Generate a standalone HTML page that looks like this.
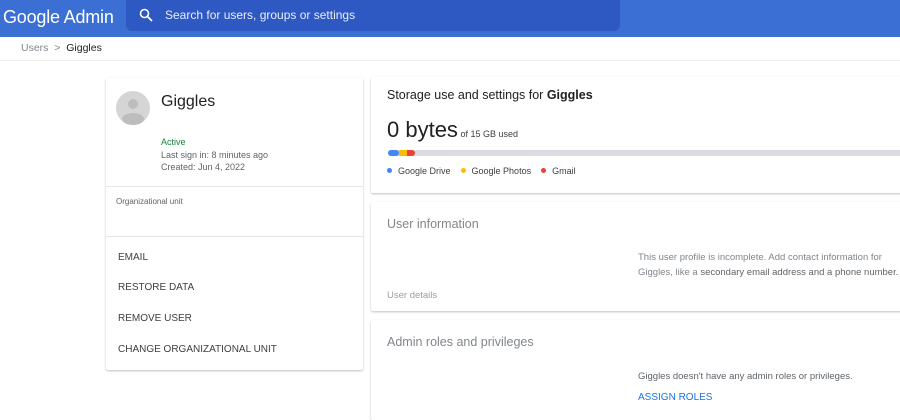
<!DOCTYPE html>
<html><head><meta charset="utf-8"><style>
*{box-sizing:border-box;margin:0;padding:0}
body{width:900px;height:412px;overflow:hidden;background:#fff;font-family:"Liberation Sans",Arial,sans-serif;color:#3c4043;position:relative}
.hdr{position:absolute;left:0;top:0;width:900px;height:37px;background:#3b6fd4}
.logo{position:absolute;left:3px;top:7px;color:#fff;font-size:18px;letter-spacing:-0.2px}
.search{position:absolute;left:126px;top:0;width:494px;height:31px;background:#2e58c2;border-radius:0 0 6px 6px}
.search span{position:absolute;left:39px;top:8px;color:#e8eefc;font-size:12px}
.bc{position:absolute;left:21px;top:42px;font-size:10.5px;color:#80868b}
.bc b{font-weight:normal;color:#202124}
.sep{position:absolute;left:0;top:60px;width:900px;height:1px;background:#eee}
.card{position:absolute;background:#fff;box-shadow:0 1px 2px rgba(0,0,0,.25);border-radius:2px}
.t{position:absolute;white-space:nowrap}
.dot{display:inline-block;width:5px;height:5px;border-radius:50%;margin-right:6px;vertical-align:1px}
</style></head><body>
<div class="hdr"><div class="logo">Google Admin</div>
<div class="search"><svg style="position:absolute;left:13px;top:8px" width="14" height="14" viewBox="0 0 14 14"><circle cx="5.5" cy="5.5" r="4" fill="none" stroke="#fff" stroke-width="1.6"/><path d="M8.5 8.5L13 13" stroke="#fff" stroke-width="1.8"/></svg><span>Search for users, groups or settings</span></div></div>
<div class="bc">Users &nbsp;&gt;&nbsp; <b>Giggles</b></div>
<div class="sep"></div>

<div class="card" style="left:106px;top:78px;width:257px;height:292px">
<svg class="t" style="left:10px;top:13px" width="34" height="34" viewBox="0 0 34 34"><circle cx="17" cy="17" r="17" fill="#d5d5d5"/><circle cx="17" cy="13" r="5" fill="#bdbdbd"/><ellipse cx="17" cy="28" rx="11" ry="6" fill="#bdbdbd"/></svg>
<div class="t" style="left:55px;top:15px;font-size:16px;color:#202124">Giggles</div>
<div class="t" style="left:55px;top:59px;font-size:9px;color:#188038">Active</div>
<div class="t" style="left:55px;top:72px;font-size:9px;color:#5f6368">Last sign in: 8 minutes ago</div>
<div class="t" style="left:55px;top:84px;font-size:9px;color:#5f6368">Created: Jun 4, 2022</div>
<div class="t" style="left:0;top:108px;width:257px;height:1px;background:#e6e6e6"></div>
<div class="t" style="left:10px;top:119px;font-size:8px;color:#5f6368">Organizational unit</div>
<div class="t" style="left:0;top:158px;width:257px;height:1px;background:#e6e6e6"></div>
<div class="t" style="left:12px;top:174px;font-size:10px;color:#3c4043">EMAIL</div>
<div class="t" style="left:12px;top:204px;font-size:10px;color:#3c4043">RESTORE DATA</div>
<div class="t" style="left:12px;top:235px;font-size:10px;color:#3c4043">REMOVE USER</div>
<div class="t" style="left:12px;top:266px;font-size:10px;color:#3c4043">CHANGE ORGANIZATIONAL UNIT</div>
</div>

<div class="card" style="left:371px;top:77px;width:540px;height:116px">
<div class="t" style="left:16px;top:11px;font-size:12.5px;color:#202124">Storage use and settings for <b>Giggles</b></div>
<div class="t" style="left:16px;top:40px;font-size:22px;color:#202124">0 bytes<span style="font-size:9px;color:#3c4043"> of 15 GB used</span></div>
<div class="t" style="left:17px;top:73px;width:520px;height:6px;background:#dadce0;border-radius:3px"></div>
<div class="t" style="left:17px;top:73px;width:11px;height:6px;background:#4285f4;border-radius:3px"></div>
<div class="t" style="left:28px;top:73px;width:8px;height:6px;background:#fbbc04"></div>
<div class="t" style="left:36px;top:73px;width:8px;height:6px;background:#ea4335;border-radius:0 3px 3px 0"></div>
<div class="t" style="left:16px;top:89px;font-size:9px;color:#3c4043"><span class="dot" style="background:#4285f4"></span>Google Drive &nbsp;&nbsp;&nbsp;<span class="dot" style="background:#fbbc04"></span>Google Photos &nbsp;&nbsp;&nbsp;<span class="dot" style="background:#ea4335"></span>Gmail</div>
</div>

<div class="card" style="left:371px;top:202px;width:540px;height:109px">
<div class="t" style="left:16px;top:15px;font-size:12.5px;color:#80868b">User information</div>
<div class="t" style="left:267px;top:48px;font-size:9.5px;color:#80868b;line-height:15px">This user profile is incomplete. Add contact information for<br>Giggles, like a <span style="color:#5f6368">secondary email address and a phone number.</span></div>
<div class="t" style="left:16px;top:88px;font-size:9.5px;color:#9aa0a6">User details</div>
</div>

<div class="card" style="left:371px;top:320px;width:540px;height:100px">
<div class="t" style="left:16px;top:15px;font-size:12.5px;color:#80868b">Admin roles and privileges</div>
<div class="t" style="left:267px;top:51px;font-size:9.5px;color:#5f6368">Giggles doesn't have any admin roles or privileges.</div>
<div class="t" style="left:267px;top:72px;font-size:10px;color:#1a73e8">ASSIGN ROLES</div>
</div>
</body></html>
